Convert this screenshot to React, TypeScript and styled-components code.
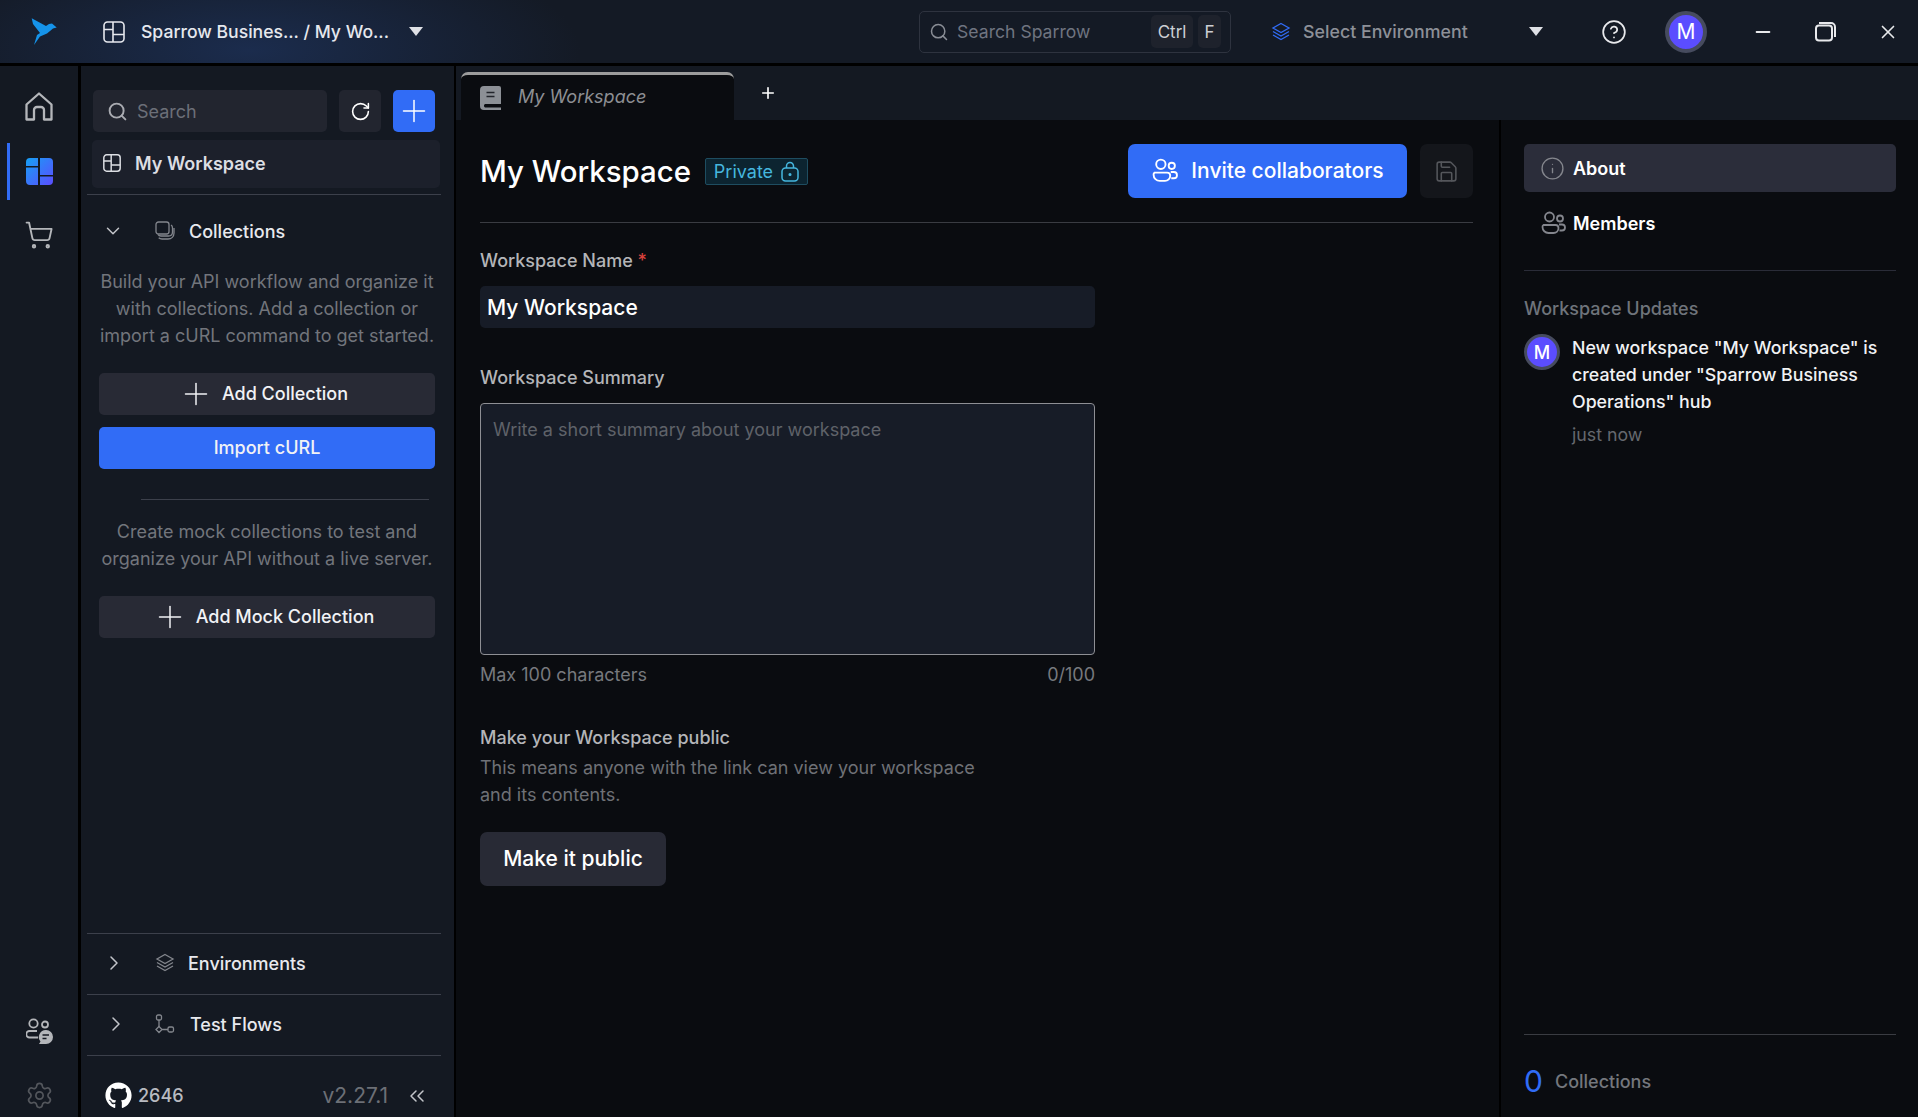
import React from 'react';
import styled, { createGlobalStyle } from 'styled-components';
import { Plus, ChevronDown, ChevronRight, ChevronsLeft, RotateCw, Search as SearchIcon, Minus, X, ShoppingCart, Settings, CircleHelp, Info, Save } from 'lucide-react';
import { FaGithub } from 'react-icons/fa';

const GlobalStyle = createGlobalStyle`
  html, body { margin: 0; padding: 0; height: 100%; background: #0a0c10; overflow: hidden; }
  body { font-family: Inter, "Liberation Sans", sans-serif; color: #fff; }
  #root { height: 100%; }
  * { box-sizing: border-box; }
`;

const Shell = styled.div`
  display: flex;
  flex-direction: column;
  height: 1117px;
  width: 1918px;
`;

/* top bar */
const TopBar = styled.header`
  height: 66px;
  flex: none;
  display: flex;
  align-items: center;
  padding: 0 23px 0 31px;
  border-bottom: 3px solid #000;
  background: radial-gradient(ellipse 330px 110px at 250px 50px, #1b2c4d 0%, #141a25 100%);
  background-color: #141922;
`;

const Logo = styled.svg`
  width: 27px;
  height: 27px;
  flex: none;
`;

const HubName = styled.div`
  display: flex;
  align-items: center;
  margin-left: 45px;
  font-size: 17.6px;
  font-weight: 500;
  color: #e6e8ee;
  white-space: nowrap;
  width: 321px;
  svg { flex: none; margin-right: 16px; }
`;

const Caret = styled.span`
  width: 0;
  height: 0;
  flex: none;
  margin-left: ${p => p.$left ?? 0}px;
  border-left: 7.5px solid transparent;
  border-right: 7.5px solid transparent;
  border-top: 9px solid #dfe1e6;
`;

const GlobalSearch = styled.div`
  width: 312px;
  height: 42px;
  margin-left: 496px;
  flex: none;
  display: flex;
  align-items: center;
  padding: 0 9px;
  border: 1px solid #2e333f;
  border-radius: 5px;
  color: #6f7480;
  font-size: 17.6px;
  svg { color: #8a8e96; }
`;

const SearchHint = styled.span`
  margin-left: 8px;
  flex: 1;
`;

const KeyCap = styled.span`
  height: 33px;
  min-width: ${p => p.$w}px;
  margin-left: ${p => p.$ml ?? 0}px;
  display: inline-flex;
  align-items: center;
  justify-content: center;
  border-radius: 5px;
  background: #1e222c;
  color: #ccced4;
  font-size: 17px;
`;

const EnvSelect = styled.div`
  display: flex;
  align-items: center;
  margin-left: 40px;
  width: 272px;
  flex: none;
  font-size: 17.8px;
  font-weight: 500;
  color: #8d9098;
  svg { margin-right: 12px; flex: none; }
  span:last-child { margin-left: auto; }
`;

const TopRight = styled.div`
  margin-left: 58px;
  flex: 1;
  display: flex;
  align-items: center;
  color: #e8e9ec;
`;

const TopSlot = styled.span`
  display: flex;
  margin-left: ${p => p.$ml}px;
`;

const Avatar = styled.div`
  width: ${p => p.$size}px;
  height: ${p => p.$size}px;
  flex: none;
  border-radius: 50%;
  background: #5b4dff;
  border: ${p => p.$ring}px solid #464b5e;
  display: flex;
  align-items: center;
  justify-content: center;
  color: #fff;
  font-size: ${p => p.$font}px;
  font-weight: ${p => p.$weight ?? 500};
`;

const Body = styled.div`
  flex: 1;
  display: flex;
  min-height: 0;
`;

/* left rail */
const Rail = styled.nav`
  width: 81px;
  flex: none;
  display: flex;
  flex-direction: column;
  align-items: center;
  padding: 26px 0 8px;
  border-right: 3px solid #000;
  background: #141922;
  color: #b4b6ba;
`;

const RailItem = styled.div`
  position: relative;
  width: 100%;
  height: ${p => p.$h}px;
  margin-top: ${p => p.$mt ?? 0}px;
  display: flex;
  align-items: center;
  justify-content: center;
  color: ${p => p.$dim ? '#53565c' : 'inherit'};
`;

const RailBottom = styled.div`
  margin-top: auto;
  width: 100%;
`;

const ActiveMark = styled.span`
  position: absolute;
  left: 7px;
  top: 0;
  bottom: 0;
  width: 3px;
  background: #316cf6;
`;

/* sidebar */
const Sidebar = styled.aside`
  width: 375px;
  flex: none;
  display: flex;
  flex-direction: column;
  padding: 24px 13px 0 6px;
  border-right: 2px solid #000;
  background: #141922;
`;

const ToolRow = styled.div`
  display: flex;
  gap: 12px;
  padding: 0 6px;
`;

const SideSearch = styled.div`
  width: 234px;
  height: 42px;
  display: flex;
  align-items: center;
  gap: 9px;
  padding: 0 14px;
  border-radius: 5px;
  background: #22252f;
  color: #6c6f78;
  font-size: 18px;
  svg { color: #a9abb1; }
`;

const SquareButton = styled.button`
  width: 42px;
  height: 42px;
  padding: 0;
  display: flex;
  align-items: center;
  justify-content: center;
  border: 0;
  border-radius: 5px;
  color: #fff;
  background: ${p => p.$primary ? '#316cf6' : '#22252f'};
`;

const CurrentWorkspace = styled.div`
  height: 48px;
  margin: 8px 1px 6px 5px;
  display: flex;
  align-items: center;
  gap: 14px;
  padding: 0 0 2px 11px;
  border-radius: 5px;
  background: #1c202b;
  color: #dcdee3;
  font-size: 18px;
  font-weight: 600;
`;

const Rule = styled.hr`
  margin: 0;
  border: 0;
  height: 1px;
  flex: none;
  background: #3c404b;
`;

const SectionRow = styled.div`
  height: ${p => p.$h ?? 60}px;
  display: flex;
  align-items: center;
  padding-bottom: 2px;
  color: #e8e9ee;
  font-size: 18px;
  font-weight: 500;
`;

const RowChevron = styled.span`
  width: 56px;
  flex: none;
  display: flex;
  padding-left: ${p => p.$pl ?? 15}px;
  color: #c3c5ca;
`;

const RowIcon = styled.span`
  width: ${p => p.$w ?? 45}px;
  flex: none;
  display: flex;
  padding-left: ${p => p.$pl ?? 12}px;
  color: #83868d;
`;

const Blurb = styled.p`
  margin: ${p => p.$mt}px 0 0;
  padding: 0 6px 0 12px;
  text-align: center;
  font-size: 18px;
  line-height: 27px;
  color: #72757c;
  white-space: nowrap;
`;

const SideButton = styled.button`
  width: 336px;
  height: 42px;
  margin: ${p => p.$mt}px 0 0 12px;
  flex: none;
  display: flex;
  align-items: center;
  justify-content: center;
  gap: 15px;
  padding: 0 0 2px;
  border: 0;
  border-radius: 5px;
  font: 500 18px Inter, "Liberation Sans", sans-serif;
  color: #f1f2f5;
  background: ${p => p.$primary ? '#316cf6' : '#282a35'};
  svg { margin: 2px -7.5px 0; }
`;

const InsetRule = styled(Rule)`
  width: 288px;
  margin: 30px 0 0 54px;
`;

const SideBottom = styled.div`
  margin-top: auto;
  display: flex;
  flex-direction: column;
`;

const FooterRow = styled.div`
  height: 61px;
  flex: none;
  display: flex;
  align-items: center;
  padding: 18px 12px 0 18px;
  font-size: 18px;
  color: #b8bac0;
`;

const Stars = styled.span`
  margin-left: 6px;
  font-weight: 500;
`;

const Version = styled.span`
  margin-left: auto;
  margin-right: 17px;
  font-size: 21px;
  color: #6c6f76;
`;

/* main */
const Main = styled.main`
  flex: 1;
  min-width: 0;
  display: flex;
  flex-direction: column;
`;

const TabBar = styled.div`
  height: 54px;
  flex: none;
  display: flex;
  align-items: flex-end;
  padding-left: 5px;
  background: #141922;
`;

const Tab = styled.div`
  width: 273px;
  height: 48px;
  display: flex;
  align-items: center;
  gap: 17px;
  padding: 0 0 2px 19px;
  border-top: 3px solid #9c9c9c;
  border-radius: 7px 7px 0 0;
  background: #0a0c10;
  color: #8d8f93;
  font-size: 18px;
  font-style: italic;
  svg { margin-top: 3px; }
`;

const NewTab = styled.span`
  align-self: center;
  margin: 0 0 0 25px;
  display: flex;
  color: #fff;
`;

const Panels = styled.div`
  flex: 1;
  min-height: 0;
  display: flex;
`;

const Workspace = styled.section`
  width: 1043px;
  flex: none;
  padding: 24px 26px 0 24px;
`;

const HeadRow = styled.div`
  display: flex;
  align-items: center;
  height: 54px;
`;

const Title = styled.h1`
  margin: 0;
  font-size: 29.4px;
  font-weight: 500;
  color: #fff;
`;

const PrivateBadge = styled.span`
  margin-left: 14px;
  height: 27px;
  width: 103px;
  display: flex;
  align-items: center;
  justify-content: center;
  gap: 8px;
  border: 1px solid #1e4d60;
  border-radius: 2px;
  background: #0c2430;
  color: #45b6de;
  font-size: 18px;
`;

const InviteButton = styled.button`
  margin-left: auto;
  width: 279px;
  height: 54px;
  display: flex;
  align-items: center;
  justify-content: center;
  gap: 13px;
  padding: 0 0 2px;
  border: 0;
  border-radius: 7px;
  background: #316cf6;
  color: #fff;
  font: 500 21px Inter, "Liberation Sans", sans-serif;
`;

const SaveButton = styled.button`
  margin-left: 13px;
  width: 53px;
  height: 54px;
  display: flex;
  align-items: center;
  justify-content: center;
  border: 0;
  border-radius: 7px;
  background: #14161b;
  color: #54565b;
`;

const HeadRule = styled(Rule)`
  margin: 24px 0 28px;
  background: #3a3c42;
`;

const FieldLabel = styled.label`
  display: block;
  margin-top: ${p => p.$mt ?? 0}px;
  font-size: 18px;
  line-height: 20px;
  font-weight: 500;
  color: #b4b5b8;
  em { font-style: normal; color: #d8413c; }
`;

const NameInput = styled.input`
  display: block;
  width: 615px;
  height: 42px;
  margin-top: 15px;
  padding: 0 7px;
  border: 0;
  border-radius: 5px;
  outline: none;
  background: #171c27;
  color: #fff;
  font: 500 21px Inter, "Liberation Sans", sans-serif;
`;

const SummaryInput = styled.textarea`
  display: block;
  width: 615px;
  height: 252px;
  margin-top: 15px;
  padding: 14px 12px;
  border: 1px solid #8e8f94;
  border-radius: 4px;
  outline: none;
  resize: none;
  background: #171c27;
  font: 400 18px/24px Inter, "Liberation Sans", sans-serif;
  &::placeholder { color: #5f6269; opacity: 1; }
`;

const CountRow = styled.div`
  width: 615px;
  margin-top: 9px;
  display: flex;
  justify-content: space-between;
  font-size: 18px;
  line-height: 22px;
  color: #77797e;
`;

const PublicTitle = styled.div`
  margin-top: 40px;
  font-size: 18px;
  line-height: 24px;
  font-weight: 500;
  color: #b4b5b8;
`;

const PublicNote = styled.p`
  margin: 4px 0 0;
  font-size: 18px;
  line-height: 27px;
  color: #6f7176;
`;

const PublicButton = styled.button`
  display: block;
  width: 186px;
  height: 54px;
  margin-top: 24px;
  padding: 0 0 2px;
  border: 0;
  border-radius: 7px;
  background: #282a35;
  color: #fff;
  font: 500 21px Inter, "Liberation Sans", sans-serif;
`;

/* right panel */
const InfoPanel = styled.aside`
  flex: 1;
  min-width: 0;
  display: flex;
  flex-direction: column;
  padding: 24px 22px 0 23px;
  border-left: 2px solid #000;
`;

const InfoTab = styled.div`
  height: 48px;
  display: flex;
  align-items: center;
  gap: ${p => p.$gap}px;
  padding-left: 16px;
  border-radius: 5px;
  background: ${p => p.$active ? '#2b2d3a' : 'transparent'};
  margin-bottom: ${p => p.$mb ?? 0}px;
  color: #fff;
  font-size: 18px;
  font-weight: 600;
  svg { color: #84868d; flex: none; }
`;

const InfoRule = styled(Rule)`
  margin-top: 23px;
  background: #2a2c38;
`;

const UpdatesTitle = styled.div`
  margin-top: 26px;
  font-size: 18px;
  line-height: 24px;
  font-weight: 500;
  color: #6f747b;
`;

const UpdateItem = styled.div`
  display: flex;
  gap: 12px;
  margin-top: 13px;
`;

const UpdateText = styled.div`
  font-size: 17.8px;
  font-weight: 500;
  line-height: 27px;
  color: #f1f2f4;
`;

const UpdateTime = styled.div`
  margin-top: 6px;
  font-weight: 400;
  line-height: 27px;
  color: #65686e;
`;

const Summary = styled.div`
  margin-top: auto;
  height: 83px;
  flex: none;
  display: flex;
  align-items: center;
  gap: 12px;
  padding-top: 10px;
  border-top: 1px solid #3a3c42;
  font-size: 18px;
  font-weight: 500;
  color: #74777d;
  b { font-size: 30px; font-weight: 400; color: #316cf6; }
`;

/* drawn icons */
const SparrowLogo = () => (
  <Logo viewBox="0 0 27 27">
    <path d="M.7.3 15 8l3-2 3-.5 4.700 4-3.700 1-6 5-7 3L3 27l3-10 3-2-7-9z" fill="#1593ea" />
  </Logo>
);

const HomeIcon = () => (
  <svg width="28" height="29" viewBox="0 0 28 29" fill="none" stroke="currentColor" strokeWidth="2.300" strokeLinejoin="round">
    <path d="M1.500 12.500 14 1.500l12.500 11V27.500H19V18a3 3 0 0 0-3-3h-4a3 3 0 0 0-3 3v9.500H1.500z" />
  </svg>
);

const PanesIcon = ({ size, stroke = 1.6 }: { size: number; stroke?: number }) => (
  <svg width={size} height={size} viewBox="0 0 22 22" fill="none" stroke="currentColor" strokeWidth={stroke}>
    <rect x="1" y="1" width="20" height="20" rx="3.500" />
    <path d="M10 1v20M1 8.500h9M10 13.500h11" />
  </svg>
);

const PanesFilled = () => (
  <svg width="27" height="27" viewBox="0 0 27 27">
    <defs>
      <linearGradient id="paneFill" x1="0" y1="0" x2="1" y2="1">
        <stop offset="0" stopColor="#16a0f5" />
        <stop offset="1" stopColor="#5b4dff" />
      </linearGradient>
    </defs>
    <path fill="url(#paneFill)" d="M4 0h8v8H0V4a4 4 0 0 1 4-4zM0 9.500h12V27H4a4 4 0 0 1-4-4zM14 0h9a4 4 0 0 1 4 4v13H14zM14 18.500h13V23a4 4 0 0 1-4 4h-9z" />
  </svg>
);

const PeopleIcon = ({ size, color = 'currentColor' }: { size: number; color?: string }) => (
  <svg width={size} height={size} viewBox="0 0 26 26" fill="none" stroke={color} strokeWidth="1.800">
    <circle cx="9.500" cy="7" r="4.500" />
    <circle cx="20" cy="8.500" r="3" />
    <path d="M3.500 15h12a3 3 0 0 1 3 3v0a5 5 0 0 1-5 5h-5a6 6 0 0 1-6-6v0a2 2 0 0 1 1-2zM19 14.500h3a2.500 2.500 0 0 1 0 6h-2.500" />
  </svg>
);

const PeopleChatIcon = () => (
  <svg width="27" height="27" viewBox="0 0 27 27" fill="none" stroke="#b4b6ba" strokeWidth="1.800">
    <circle cx="7.500" cy="5.500" r="4.200" />
    <circle cx="19" cy="6.500" r="3" />
    <path d="M11 13H3.500a2.800 2.800 0 0 0 0 6.500H12" />
    <path stroke="none" fill="#b4b6ba" d="M20 12a7 7 0 0 1 0 14h-7l1.500-2.500A7 7 0 0 1 20 12z" />
    <path stroke="#141922" strokeWidth="1.400" d="M16.500 17h6.500M16.500 20.500h4" />
  </svg>
);

const LayersIcon = ({ size, color }: { size: number; color: string }) => (
  <svg width={size} height={size} viewBox="0 0 20 20" fill="none" stroke={color} strokeWidth="1.300">
    <path d="M10 1.500l8 4.500-8 4.500L2 6z" />
    <path d="M2 9.500l8 4.500 8-4.500M2 13l8 4.500 8-4.500" />
  </svg>
);

const StackIcon = () => (
  <svg width="20" height="20" viewBox="0 0 20 20" fill="none" stroke="currentColor" strokeWidth="1.300">
    <rect x="1" y="1" width="13" height="12" rx="2.500" />
    <path d="M16 4c1 .5 1.500 1.500 1.500 3v4c0 2.500-1.500 4-4 4H6c-1.500 0-2.500-.5-3-1.500" />
    <path d="M19 7v5c0 3.500-2.500 6-6 6H7c-1.500 0-2.500-.5-3.300-1.300" />
  </svg>
);

const FlowIcon = () => (
  <svg width="20" height="20" viewBox="0 0 20 20" fill="none" stroke="currentColor" strokeWidth="1.300">
    <rect x="1.500" y="1" width="5" height="5" rx="1.500" />
    <path d="M4 6v7" />
    <path d="M4 12.500l3 3-3 3-3-3zM7 15.500h6" />
    <rect x="13" y="13" width="5.500" height="5" rx="1.500" />
  </svg>
);

const BookIcon = () => (
  <svg width="21" height="24" viewBox="0 0 21 24">
    <path fill="#8c9096" d="M4 0h15a2 2 0 0 1 2 2v16H5a2 2 0 0 0 0 3.500h16V24H4a4 4 0 0 1-4-4V4a4 4 0 0 1 4-4z" />
    <path stroke="#22252c" strokeWidth="1.600" d="M6.500 6.500h8M6.500 10.500h8" />
  </svg>
);

const LockIcon = () => (
  <svg width="18" height="21" viewBox="0 0 18 21" fill="none" stroke="#45b6de" strokeWidth="1.500">
    <rect x="1" y="7" width="16" height="13" rx="3.500" />
    <path d="M5.500 7V5a3.500 3.500 0 0 1 7 0v2" />
    <circle cx="9" cy="13.500" r=".8" fill="#45b6de" />
  </svg>
);

const RestoreIcon = () => (
  <svg width="21" height="20" viewBox="0 0 21 20" fill="none" stroke="#e8e9ec" strokeWidth="2">
    <rect x="1" y="3.500" width="16" height="15" rx="3" />
    <path d="M4 1h12a4 4 0 0 1 4 4v10" />
  </svg>
);

const App: React.FC = () => {
  return (
    <Shell>
      <GlobalStyle />
      <TopBar>
        <SparrowLogo />
        <HubName>
          <PanesIcon size={22} />
          Sparrow Busines... / My Wo...
          <Caret $left={20} />
        </HubName>
        <GlobalSearch>
          <SearchIcon size={20} strokeWidth={1.8} />
          <SearchHint>Search Sparrow</SearchHint>
          <KeyCap $w={42}>Ctrl</KeyCap>
          <KeyCap $w={23} $ml={5}>F</KeyCap>
        </GlobalSearch>
        <EnvSelect>
          <LayersIcon size={20} color="#316cf6" />
          Select Environment
          <Caret />
        </EnvSelect>
        <TopRight>
          <CircleHelp size={26} strokeWidth={1.6} />
          <TopSlot $ml={38}><Avatar $size={42} $ring={4} $font={21} $weight={400}>M</Avatar></TopSlot>
          <TopSlot $ml={45}><Minus size={22} strokeWidth={2} /></TopSlot>
          <TopSlot $ml={41}><RestoreIcon /></TopSlot>
          <TopSlot $ml={41}><X size={22} strokeWidth={1.8} /></TopSlot>
        </TopRight>
      </TopBar>
      <Body>
        <Rail>
          <RailItem $h={28}><HomeIcon /></RailItem>
          <RailItem $h={57} $mt={23}>
            <ActiveMark />
            <PanesFilled />
          </RailItem>
          <RailItem $h={28} $mt={21}><ShoppingCart size={30} strokeWidth={1.5} /></RailItem>
          <RailBottom>
            <RailItem $h={27}><PeopleChatIcon /></RailItem>
            <RailItem $h={28} $mt={36} $dim><Settings size={29} strokeWidth={1.4} /></RailItem>
          </RailBottom>
        </Rail>
        <Sidebar>
          <ToolRow>
            <SideSearch>
              <SearchIcon size={21} strokeWidth={2.2} />
              Search
            </SideSearch>
            <SquareButton><RotateCw size={21} strokeWidth={1.8} /></SquareButton>
            <SquareButton $primary><Plus size={36} strokeWidth={1} /></SquareButton>
          </ToolRow>
          <CurrentWorkspace>
            <PanesIcon size={18} stroke={1.8} />
            My Workspace
          </CurrentWorkspace>
          <Rule />
          <SectionRow $h={74}>
            <RowChevron $pl={15}><ChevronDown size={22} strokeWidth={1.6} /></RowChevron>
            <RowIcon $w={46} $pl={12}><StackIcon /></RowIcon>
            Collections
          </SectionRow>
          <Blurb $mt={-1}>
            Build your API workflow and organize it<br />
            with collections. Add a collection or<br />
            import a cURL command to get started.
          </Blurb>
          <SideButton $mt={24}><Plus size={36} strokeWidth={1} />Add Collection</SideButton>
          <SideButton $mt={12} $primary>Import cURL</SideButton>
          <InsetRule />
          <Blurb $mt={18}>
            Create mock collections to test and<br />
            organize your API without a live server.
          </Blurb>
          <SideButton $mt={24}><Plus size={36} strokeWidth={1} />Add Mock Collection</SideButton>
          <SideBottom>
            <Rule />
            <SectionRow>
              <RowChevron><ChevronRight size={24} strokeWidth={1.5} /></RowChevron>
              <RowIcon><LayersIcon size={20} color="#83868d" /></RowIcon>
              Environments
            </SectionRow>
            <Rule />
            <SectionRow>
              <RowChevron $pl={17}><ChevronRight size={24} strokeWidth={1.5} /></RowChevron>
              <RowIcon $w={47}><FlowIcon /></RowIcon>
              Test Flows
            </SectionRow>
            <Rule />
            <FooterRow>
              <FaGithub size={27} color="#fff" />
              <Stars>2646</Stars>
              <Version>v2.27.1</Version>
              <ChevronsLeft size={24} strokeWidth={1.5} color="#c3c5ca" />
            </FooterRow>
          </SideBottom>
        </Sidebar>
        <Main>
          <TabBar>
            <Tab>
              <BookIcon />
              My Workspace
            </Tab>
            <NewTab><Plus size={18} strokeWidth={2.2} /></NewTab>
          </TabBar>
          <Panels>
            <Workspace>
              <HeadRow>
                <Title>My Workspace</Title>
                <PrivateBadge>Private <LockIcon /></PrivateBadge>
                <InviteButton><PeopleIcon size={27} />Invite collaborators</InviteButton>
                <SaveButton><Save size={25} strokeWidth={1.5} /></SaveButton>
              </HeadRow>
              <HeadRule />
              <FieldLabel>Workspace Name <em>*</em></FieldLabel>
              <NameInput readOnly value="My Workspace" />
              <FieldLabel $mt={40}>Workspace Summary</FieldLabel>
              <SummaryInput readOnly placeholder="Write a short summary about your workspace" />
              <CountRow>
                <span>Max 100 characters</span>
                <span>0/100</span>
              </CountRow>
              <PublicTitle>Make your Workspace public</PublicTitle>
              <PublicNote>
                This means anyone with the link can view your workspace<br />
                and its contents.
              </PublicNote>
              <PublicButton>Make it public</PublicButton>
            </Workspace>
            <InfoPanel>
              <InfoTab $active $mb={7} $gap={8}><Info size={25} strokeWidth={1.3} />About</InfoTab>
              <InfoTab $gap={7}><PeopleIcon size={26} />Members</InfoTab>
              <InfoRule />
              <UpdatesTitle>Workspace Updates</UpdatesTitle>
              <UpdateItem>
                <Avatar $size={36} $ring={3} $font={18}>M</Avatar>
                <UpdateText>
                  New workspace "My Workspace" is<br />
                  created under "Sparrow Business<br />
                  Operations" hub
                  <UpdateTime>just now</UpdateTime>
                </UpdateText>
              </UpdateItem>
              <Summary><b>0</b>Collections</Summary>
            </InfoPanel>
          </Panels>
        </Main>
      </Body>
    </Shell>
  );
};

export default App;
